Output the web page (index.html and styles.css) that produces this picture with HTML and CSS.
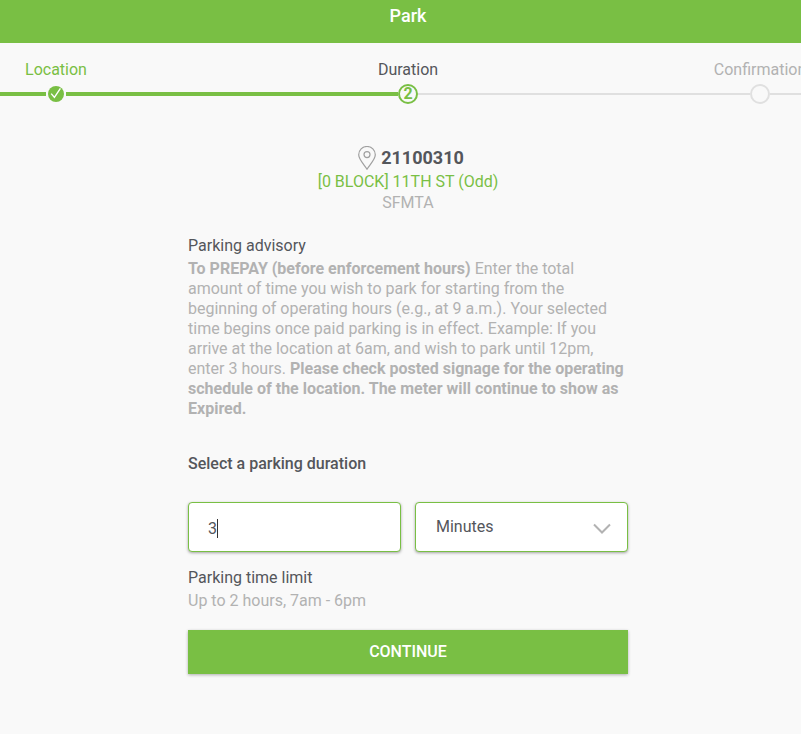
FILE: index.html
```
<!DOCTYPE html>
<html lang="en">
<head>
<meta charset="utf-8">
<title>Park</title>
<link rel="stylesheet" href="styles.css">
</head>
<body>
<div class="page">
  <header class="header"><h1 class="title">Park</h1></header>
  <nav class="steps">
    <div class="step done">
      <span class="label">Location</span>
      <div class="track">
        <i class="line green"></i>
        <svg class="mark" viewBox="0 0 20 20"><circle cx="10" cy="10" r="8" fill="#79bf44"/><path d="M5.2 9.6 8.4 13.4 14.4 4.4" fill="none" stroke="#fff" stroke-width="1.4"/></svg>
        <i class="line green"></i>
      </div>
    </div>
    <div class="step current">
      <span class="label">Duration</span>
      <div class="track">
        <i class="line green"></i>
        <span class="circle">2</span>
        <i class="line"></i>
      </div>
    </div>
    <div class="step">
      <span class="label">Confirmation</span>
      <div class="track">
        <i class="line"></i>
        <span class="circle"></span>
        <i class="line"></i>
      </div>
    </div>
  </nav>
  <main class="content">
    <section class="place">
      <div class="zone">
        <svg class="pin" viewBox="0 0 18 24"><path d="M9 23.2C6.2 18.6.7 13.5.7 8.8a8.3 8.3 0 0 1 16.6 0C17.3 13.5 11.8 18.6 9 23.2Z"/><circle cx="9" cy="8.6" r="3"/></svg>
        <strong>21100310</strong>
      </div>
      <div class="street">[0 BLOCK] 11TH ST (Odd)</div>
      <div class="operator">SFMTA</div>
    </section>
    <section class="advisory">
      <h2 class="heading">Parking advisory</h2>
      <p class="text"><b>To PREPAY (before enforcement hours)</b> Enter the total amount of time you wish to park for starting from the beginning of operating hours (e.g., at 9 a.m.). Your selected time begins once paid parking is in effect. Example: If you arrive at the location at 6am, and wish to park until 12pm, enter 3 hours. <b>Please check posted signage for the operating schedule of the location. The meter will continue to show as Expired.</b></p>
    </section>
    <h2 class="prompt">Select a parking duration</h2>
    <div class="fields">
      <div class="field amount"><span>3</span><i class="caret"></i></div>
      <div class="field unit"><span>Minutes</span>
        <svg class="chevron" viewBox="0 0 18 12"><path d="M1 1.5 9 9.5 17 1.5"/></svg>
      </div>
    </div>
    <section class="limit">
      <h2 class="heading">Parking time limit</h2>
      <p class="text">Up to 2 hours, 7am - 6pm</p>
    </section>
    <button class="continue" type="button">CONTINUE</button>
  </main>
</div>
</body>
</html>
```
FILE: styles.css
```
* { box-sizing: border-box; }
html { overflow: hidden; }
body {
  margin: 0;
  height: 734px;
  overflow: hidden;
  background: #f9f9f9;
  color: #54565b;
  font: 16px/20px Roboto, sans-serif;
}
h1, h2, p { margin: 0; font-size: 16px; font-weight: 400; }
.page { width: 816px; }
.header { height: 43px; padding-top: 6px; background: #79bf44; text-align: center; }
.title { color: #fff; font-size: 18px; font-weight: 500; line-height: 20px; }
.steps { display: grid; grid-template-columns: repeat(3, 352px); justify-content: center; padding-top: 17px; }
.step { color: #b2b2b2; text-align: center; }
.step.done { color: #79bf44; }
.step.current { color: #54565b; }
.label { display: block; height: 24px; line-height: 19px; }
.track { display: flex; align-items: center; height: 20px; }
.line { flex: 1; height: 2px; background: #e0e0e0; }
.line.green { height: 4px; background: #79bf44; }
.mark { width: 20px; height: 20px; }
.circle { width: 20px; height: 20px; border: 2px solid #e0e0e0; border-radius: 50%; font-weight: 700; line-height: 16px; }
.current .circle { border-color: #79bf44; color: #79bf44; }
.content { width: 440px; margin: 0 auto; padding-top: 42px; }
.place { text-align: center; }
.zone { display: flex; justify-content: center; align-items: center; gap: 5px; height: 24px; padding-left: 6px; font-size: 18px; }
.zone strong { font-weight: 700; }
.pin { width: 18px; height: 24px; fill: none; stroke: #a0a0a0; stroke-width: 1.2; }
.street { height: 21px; line-height: 23px; color: #79bf44; }
.operator { height: 21px; line-height: 23px; color: #b2b2b2; }
.advisory { padding-top: 24px; }
.heading { height: 23px; }
.text { color: #b2b2b2; }
.prompt { margin-top: 35px; font-weight: 500; }
.fields { display: grid; grid-template-columns: 213px 213px; gap: 14px; margin-top: 28px; }
.field { display: flex; align-items: center; height: 50px; padding: 0 16px 0 19px; border: 1px solid #79bf44; border-radius: 4px; background: #fff; box-shadow: 0 1px 3px rgba(0, 0, 0, .35); }
.amount { padding-top: 4px; }
.amount .caret { margin-bottom: 2px; }
.caret { width: 1px; height: 19px; background: #333; }
.unit { justify-content: space-between; padding-left: 20px; }
.chevron { width: 18px; height: 12px; margin-top: 3px; fill: none; stroke: #b2b2b2; stroke-width: 2; }
.limit { margin-top: 16px; }
.continue { display: block; width: 440px; height: 44px; margin-top: 19px; padding: 0; border: 0; background: #79bf44; box-shadow: 0 1px 3px rgba(0, 0, 0, .3); color: #fff; font: 500 16px/20px Roboto, sans-serif; }
```
